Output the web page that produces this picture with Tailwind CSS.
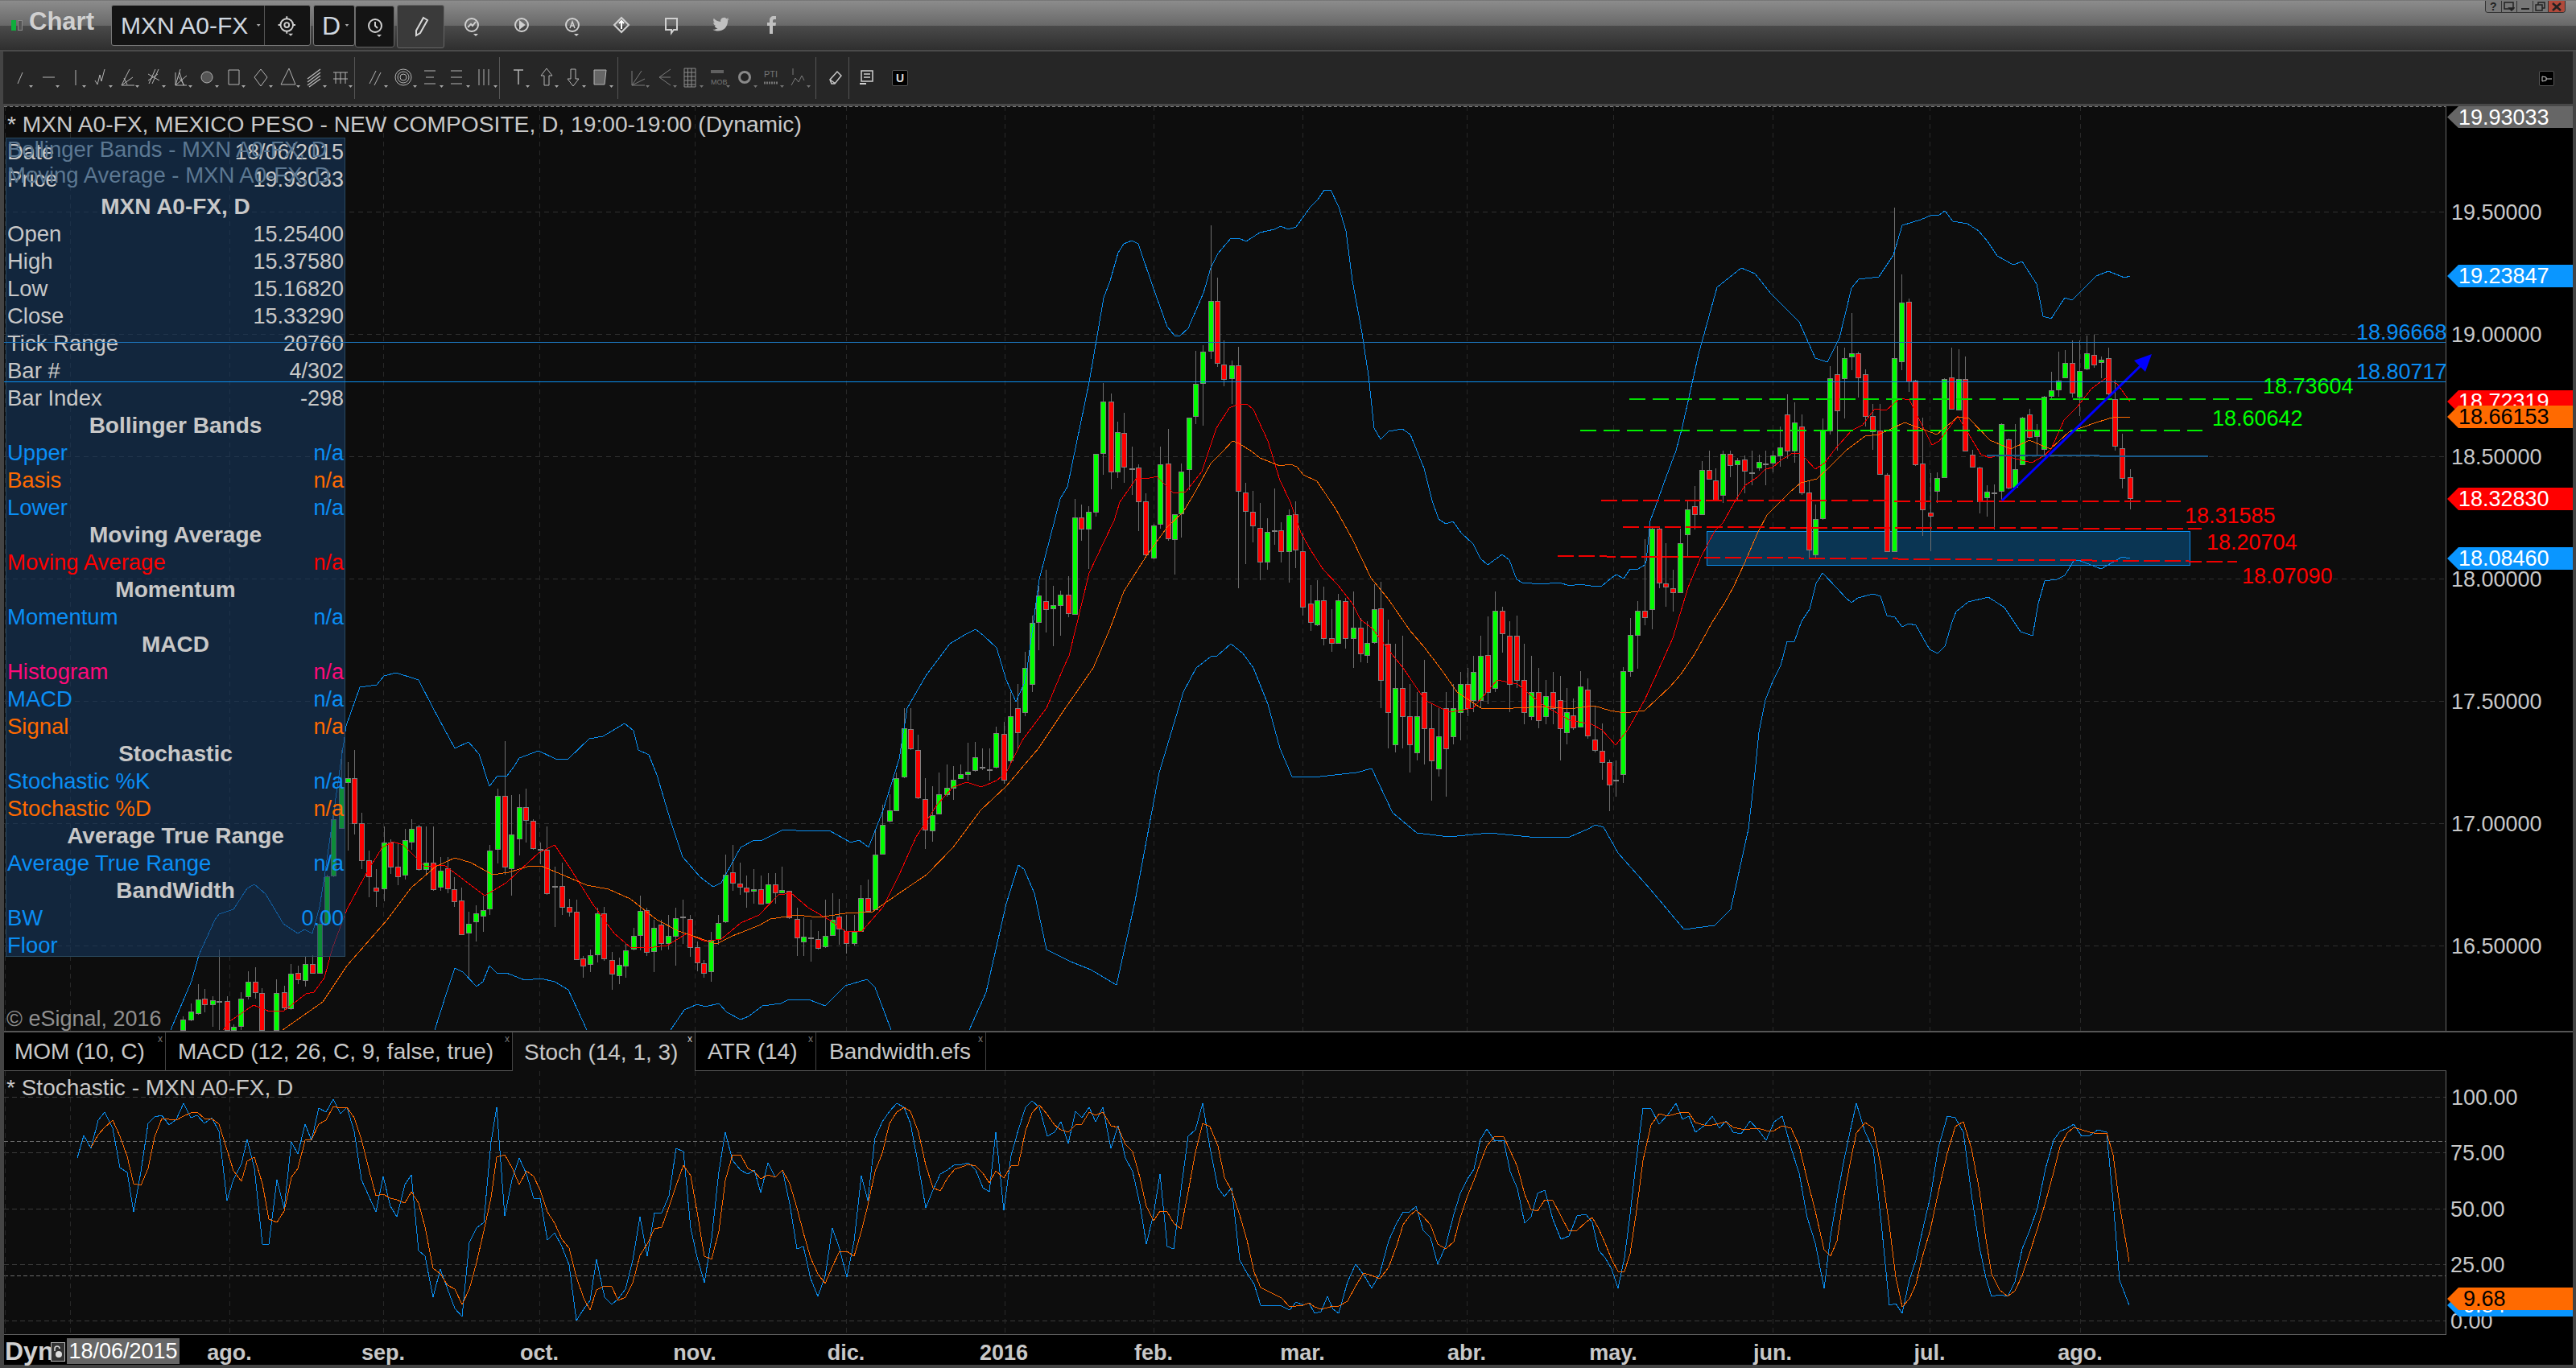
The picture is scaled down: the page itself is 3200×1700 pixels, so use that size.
<!DOCTYPE html>
<html lang="es">
<head>
<meta charset="UTF-8">
<title>Chart - MXN A0-FX</title>
<script src="https://cdn.jsdelivr.net/npm/@tailwindcss/browser@4"></script>
</head>
<body class="bg-black">
<div class="w-[3200px] h-[1700px] overflow-hidden flex flex-col font-['Liberation_Sans',Arial,sans-serif] text-[#c8c8c8] text-[27px] leading-[28px]">

  <!-- title bar -->
  <div class="h-[64px] shrink-0 relative flex items-start border-t border-[#777] bg-[linear-gradient(#8c8c8c_0,#686868_31px,#4a4a4a_31px,#2f2f2f_61px,#4a4a4a_61px)]">
    <div class="flex items-center gap-[2px] ml-[14px] mt-[24px]">
      <span class="w-[6px] h-[13px] bg-[#0fae3c]"></span><span class="w-[6px] h-[13px] bg-[#555] border border-[#888]"></span>
    </div>
    <div class="ml-[8px] w-[80px] mt-[12px] text-[31px] font-bold text-[#d0d0d0]">Chart</div>
    <div class="ml-[22px] mt-[5px] w-[248px] h-[51px] flex items-center bg-[#141414] border border-[#777] rounded-[3px]">
      <span class="ml-[11px] w-[158px] text-[30px] text-[#d0d8e0] whitespace-nowrap">MXN A0-FX</span>
      <svg class="w-[20px] h-[10px]" viewBox="0 0 20 10"><path d="M11 3h5l-2.500 3z" fill="#aaa"/></svg>
      <span class="w-px h-full bg-[#555]"></span>
      <svg class="w-[58px] h-[30px]" viewBox="0 0 58 30" fill="none" stroke="#d0d0d0" stroke-width="2"><circle cx="29" cy="14" r="8"/><circle cx="29" cy="14" r="3"/><path d="M29 3v3M29 22v3M18 14h3M37 14h3"/><path d="M31 25h6l-3 3z" fill="#d0d0d0" stroke="none"/></svg>
    </div>
    <div class="ml-[3px] mt-[5px] w-[52px] h-[51px] flex items-center bg-[#141414] border border-[#777] rounded-[3px]">
      <span class="ml-[10px] text-[32px] text-[#d0d8e0]">D</span>
      <svg class="w-[18px] h-[10px]" viewBox="0 0 18 10"><path d="M6 3h5l-2.500 3z" fill="#aaa"/></svg>
    </div>
    <div class="mt-[6px] w-[49px] h-[52px] flex items-center justify-center bg-[#141414] border border-[#666] rounded-[3px]">
      <svg class="w-[30px] h-[30px]" viewBox="0 0 30 30" fill="none" stroke="#d0d0d0" stroke-width="2"><circle cx="15" cy="14" r="8"/><path d="M15 9v5l3 3"/><path d="M17 25h6l-3 3z" fill="#d0d0d0" stroke="none"/></svg>
    </div>
    <div class="ml-[3px] mt-[5px] w-[59px] h-[54px] flex items-center justify-center bg-[#3a3a3a] border border-[#666] rounded-[3px]">
      <svg class="w-[24px] h-[30px]" viewBox="0 0 24 30" fill="none" stroke="#d8d8d8" stroke-width="2"><path d="M15 4l5 3-9 16-5 3 0-6z"/></svg>
    </div>
    <div class="ml-[3px] mt-[15px] flex items-center">
      <svg class="w-[62px] h-[32px]" viewBox="0 0 62 32" fill="none" stroke="#d0d0d0" stroke-width="2"><circle cx="31" cy="15" r="8"/><path d="M26 18l4-4 2 2 4-5"/><path d="M33 26h6l-3 3z" fill="#d0d0d0" stroke="none"/></svg>
      <svg class="w-[63px] h-[32px]" viewBox="0 0 63 32" fill="none" stroke="#d0d0d0" stroke-width="2"><circle cx="31" cy="15" r="8"/><path d="M29 11l5 4-5 4z" fill="#d0d0d0"/></svg>
      <svg class="w-[62px] h-[32px]" viewBox="0 0 62 32" fill="none" stroke="#d0d0d0" stroke-width="2"><circle cx="31" cy="15" r="8"/><path d="M28 19l3-8 3 8M29 16h4" stroke-width="1.500"/><path d="M33 26h6l-3 3z" fill="#d0d0d0" stroke="none"/></svg>
      <svg class="w-[61px] h-[32px]" viewBox="0 0 61 32" fill="none" stroke="#d0d0d0" stroke-width="2"><path d="M30 6l9 9-9 9-9-9z"/><path d="M30 10v10M27 13l3-3 3 3" stroke="#fff"/></svg>
      <svg class="w-[62px] h-[32px]" viewBox="0 0 62 32" fill="none" stroke="#d0d0d0" stroke-width="2"><path d="M24 7h14v14h-4l-3 4v-4h-7z"/></svg>
      <svg class="w-[62px] h-[32px]" viewBox="0 0 62 32"><path d="M41 9c-1 .500-2 .700-3 .800 1-.600 2-1.600 2-2.600-1 .600-2 1-3 1.200a5 5 0 0 0-8.500 4.500c-4-.200-7.500-2-10-5-1.300 2.300-.600 5.200 1.500 6.600-.800 0-1.500-.200-2.200-.600 0 2.400 1.700 4.500 4 5-.700.200-1.500.200-2.200.100.600 2 2.500 3.400 4.600 3.400-2 1.600-4.600 2.300-7.200 2 7 4.500 22 2.500 22-13.400 1-.700 1.700-1.500 2-2z" fill="#c0c0c0" transform="translate(6 0) scale(.85)"/></svg>
      <svg class="w-[62px] h-[32px]" viewBox="0 0 62 32"><path d="M29 26V16h-3v-4h3V9c0-3 2-5 5-5h3v4h-2c-1 0-2 .500-2 2v2h4l-.500 4H33v10z" fill="#c0c0c0"/></svg>
    </div>
    <div class="absolute right-[13px] top-0 flex h-[15px] w-[100px] rounded-b-[4px] overflow-hidden border border-[#333] border-t-0 text-[#222]">
      <div class="w-[20px] bg-[#777] border-r border-[#333] flex items-center justify-center text-[14px] font-bold leading-[14px]">?</div>
      <div class="w-[20px] bg-[#777] border-r border-[#333] flex items-center justify-center"><svg class="w-[14px] h-[12px]" viewBox="0 0 14 12" fill="none" stroke="#222" stroke-width="1.500"><path d="M1 1h11v8H1z"/><path d="M7 8h6l-3 3z" fill="#222"/></svg></div>
      <div class="w-[20px] bg-[#777] border-r border-[#333] flex items-end justify-center pb-[3px]"><span class="w-[10px] h-[2px] bg-[#222]"></span></div>
      <div class="w-[20px] bg-[#777] border-r border-[#333] flex items-center justify-center"><svg class="w-[14px] h-[12px]" viewBox="0 0 14 12" fill="none" stroke="#222" stroke-width="1.500"><path d="M1 4h8v7H1zM4 4V1h8v7H9"/></svg></div>
      <div class="w-[20px] bg-[#b0493a] flex items-center justify-center"><svg class="w-[12px] h-[11px]" viewBox="0 0 12 11" fill="none" stroke="#222" stroke-width="2.500"><path d="M1 1l10 9M11 1L1 10"/></svg></div>
    </div>
  </div>

  <div class="flex-1 flex flex-col min-h-0 border-l-[5px] border-r-[4px] border-b-[4px] border-[#444]">

    <!-- drawing toolbar -->
    <div class="h-[65px] shrink-0 relative bg-[#262626] flex items-center text-[#b4b4b4] -ml-[1px]">
      <div class="ml-[8px] flex items-center h-[52px]">
        <svg class="w-[33px] h-[30px]" viewBox="0 0 33 30" fill="none" stroke="#b4b4b4"><path d="M10 22l6-14"/><path d="M24 24h5l-2.500 3z" fill="#aaa" stroke="none"/></svg>
        <svg class="w-[33px] h-[30px]" viewBox="0 0 33 30" fill="none" stroke="#b4b4b4"><path d="M8 14h15"/><path d="M24 24h5l-2.500 3z" fill="#aaa" stroke="none"/></svg>
        <svg class="w-[33px] h-[30px]" viewBox="0 0 33 30" fill="none" stroke="#b4b4b4"><path d="M16 5v19"/><path d="M24 24h5l-2.500 3z" fill="#aaa" stroke="none"/></svg>
        <svg class="w-[33px] h-[30px]" viewBox="0 0 33 30" fill="none" stroke="#b4b4b4"><path d="M7 18l3 5 3-12 2 8 4-15"/><path d="M24 24h5l-2.500 3z" fill="#aaa" stroke="none"/></svg>
        <svg class="w-[33px] h-[30px]" viewBox="0 0 33 30" fill="none" stroke="#b4b4b4"><path d="M7 24L17 4M7 24l14-10M7 24h16M10 15l4 8"/><path d="M24 24h5l-2.500 3z" fill="#aaa" stroke="none"/></svg>
        <svg class="w-[33px] h-[30px]" viewBox="0 0 33 30" fill="none" stroke="#b4b4b4"><path d="M8 22l8-18M12 22l8-18M7 10l14 8M7 18l12-8"/><path d="M24 24h5l-2.500 3z" fill="#aaa" stroke="none"/></svg>
        <svg class="w-[33px] h-[30px]" viewBox="0 0 33 30" fill="none" stroke="#b4b4b4"><path d="M8 24L14 4M8 24l14-12M8 24h14M8 24V8M11 12l8 12M13 8l5 16"/><path d="M24 24h5l-2.500 3z" fill="#aaa" stroke="none"/></svg>
        <svg class="w-[33px] h-[30px]" viewBox="0 0 33 30" fill="#555" stroke="#b4b4b4"><circle cx="14" cy="14" r="7"/><path d="M24 24h5l-2.500 3z" fill="#aaa" stroke="none"/></svg>
        <svg class="w-[33px] h-[30px]" viewBox="0 0 33 30" fill="none" stroke="#b4b4b4"><path d="M8 5h13v18H8z"/><path d="M24 24h5l-2.500 3z" fill="#aaa" stroke="none"/></svg>
        <svg class="w-[34px] h-[30px]" viewBox="0 0 34 30" fill="none" stroke="#b4b4b4"><path d="M15 4l8 10-8 11-8-11z"/><path d="M25 24h5l-2.500 3z" fill="#aaa" stroke="none"/></svg>
        <svg class="w-[33px] h-[30px]" viewBox="0 0 33 30" fill="none" stroke="#b4b4b4"><path d="M16 3l8 20H6z"/><path d="M25 24h5l-2.500 3z" fill="#aaa" stroke="none"/></svg>
        <svg class="w-[33px] h-[30px]" viewBox="0 0 33 30" fill="none" stroke="#b4b4b4" stroke-width="1.500"><path d="M6 16L22 4M6 20L22 8M6 24l16-12M8 26l14-10"/><path d="M25 24h5l-2.500 3z" fill="#aaa" stroke="none"/></svg>
        <svg class="w-[31px] h-[30px]" viewBox="0 0 31 30" fill="none" stroke="#b4b4b4"><path d="M5 8h18M8 8v14M14 8v14M20 8v14M5 16h18"/><path d="M24 24h5l-2.500 3z" fill="#aaa" stroke="none"/></svg>
      </div>
      <span class="w-px h-[52px] bg-[#555]"></span>
      <div class="w-[179px] pl-[8px] flex items-center h-[52px]">
        <svg class="w-[38px] h-[30px]" viewBox="0 0 38 30" fill="none" stroke="#b4b4b4"><path d="M10 22L18 6M16 24l8-16"/><path d="M28 24h5l-2.500 3z" fill="#aaa" stroke="none"/></svg>
        <svg class="w-[33px] h-[30px]" viewBox="0 0 33 30" fill="none" stroke="#b4b4b4"><circle cx="14" cy="14" r="10"/><circle cx="14" cy="14" r="7"/><circle cx="14" cy="14" r="4"/><path d="M26 24h5l-2.500 3z" fill="#aaa" stroke="none"/></svg>
        <svg class="w-[33px] h-[30px]" viewBox="0 0 33 30" fill="none" stroke="#b4b4b4"><path d="M7 6h14M9 14h10M7 22h14"/><path d="M26 24h5l-2.500 3z" fill="#aaa" stroke="none"/></svg>
        <svg class="w-[34px] h-[30px]" viewBox="0 0 34 30" fill="none" stroke="#b4b4b4"><path d="M7 6h14M7 14h14M7 22h14"/><path d="M26 24h5l-2.500 3z" fill="#aaa" stroke="none"/></svg>
        <svg class="w-[33px] h-[30px]" viewBox="0 0 33 30" fill="none" stroke="#b4b4b4"><path d="M8 4v20M14 4v20M20 4v20"/><path d="M26 24h5l-2.500 3z" fill="#aaa" stroke="none"/></svg>
      </div>
      <span class="w-px h-[52px] bg-[#555]"></span>
      <div class="w-[146px] pl-[5px] flex items-center h-[52px]">
        <svg class="w-[38px] h-[30px]" viewBox="0 0 38 30" fill="none" stroke="#b4b4b4" stroke-width="1.500"><path d="M12 5h12M18 5v18"/><path d="M27 24h5l-2.500 3z" fill="#aaa" stroke="none"/></svg>
        <svg class="w-[33px] h-[30px]" viewBox="0 0 33 30" fill="none" stroke="#b4b4b4"><path d="M15 3l7 9h-4v12h-6V12H8z"/><path d="M25 24h5l-2.500 3z" fill="#aaa" stroke="none"/></svg>
        <svg class="w-[34px] h-[30px]" viewBox="0 0 34 30" fill="none" stroke="#b4b4b4"><path d="M15 25l7-9h-4V4h-6v12H8z"/><path d="M26 24h5l-2.500 3z" fill="#aaa" stroke="none"/></svg>
        <svg class="w-[33px] h-[30px]" viewBox="0 0 33 30" fill="#666" stroke="#b4b4b4"><path d="M7 5h15l-2 18H7z"/><path d="M26 24h5l-2.500 3z" fill="#aaa" stroke="none"/></svg>
      </div>
      <span class="w-px h-[52px] bg-[#555]"></span>
      <div class="w-[245px] pl-[8px] flex items-center h-[52px] opacity-60">
        <svg class="w-[35px] h-[30px]" viewBox="0 0 35 30" fill="none" stroke="#b4b4b4"><path d="M9 24L21 6M9 24l16-8M9 24h16M9 24V6"/><path d="M26 24h5l-2.500 3z" fill="#aaa" stroke="none"/></svg>
        <svg class="w-[33px] h-[30px]" viewBox="0 0 33 30" fill="none" stroke="#b4b4b4"><path d="M22 4L8 14l14 10M8 14h14"/><path d="M25 24h5l-2.500 3z" fill="#aaa" stroke="none"/></svg>
        <svg class="w-[33px] h-[30px]" viewBox="0 0 33 30" fill="none" stroke="#d0d0d0"><path d="M6 3h14v23H6zM10.500 3v23M15 3v23M6 8h14M6 13h14M6 18h14M6 23h14"/><path d="M25 24h5l-2.500 3z" fill="#aaa" stroke="none"/></svg>
        <svg class="w-[34px] h-[30px]" viewBox="0 0 34 30" fill="none"><path d="M6 5h16v4H6z" fill="#888"/><text x="6" y="23" font-size="9" fill="#aaa" stroke="none">MOB</text><path d="M25 24h5l-2.500 3z" fill="#aaa"/></svg>
        <svg class="w-[33px] h-[30px]" viewBox="0 0 33 30"><circle cx="14" cy="14" r="8" fill="#ccc"/><circle cx="14" cy="14" r="5" fill="#222"/><path d="M25 24h5l-2.500 3z" fill="#aaa"/></svg>
        <svg class="w-[33px] h-[30px]" viewBox="0 0 33 30" fill="none"><text x="5" y="14" font-size="11" fill="#aaa">PTI</text><path d="M5 21h18" stroke="#aaa" stroke-width="3" stroke-dasharray="2 1"/><path d="M25 24h5l-2.500 3z" fill="#aaa"/></svg>
        <svg class="w-[33px] h-[30px]" viewBox="0 0 33 30" fill="none" stroke="#b4b4b4"><path d="M6 24l5-9 4 5 4-8 3 6M8 3v8"/><path d="M25 24h5l-2.500 3z" fill="#aaa" stroke="none"/></svg>
      </div>
      <span class="w-px h-[52px] bg-[#555]"></span>
      <svg class="w-[40px] h-[30px]" viewBox="-5 0 40 30" fill="none" stroke="#c8c8c8" stroke-width="1.500"><path d="M14 22l-2-5 9-10 5 5-8 10zM12 17l7 5"/></svg>
      <span class="w-px h-[52px] bg-[#555]"></span>
      <svg class="w-[48px] h-[30px]" viewBox="0 0 48 30" fill="none" stroke="#d0d0d0" stroke-width="1.500"><path d="M15 6h14v13H15zM18 10h8M18 14h8"/><path d="M13 22h8" stroke-width="2"/></svg>
      <div class="ml-[5px] w-[20px] h-[20px] flex items-center justify-center bg-black border border-[#555] rounded-[2px] text-[14px] font-bold text-[#ddd] leading-none">U</div>
      <div class="absolute left-[3150px] top-[24px] w-[19px] h-[19px] flex items-center justify-center bg-black border border-[#555] rounded-[2px]">
        <svg class="w-[14px] h-[10px]" viewBox="0 0 14 10" fill="none" stroke="#ccc"><path d="M1 2l5 1v4L1 8zM6 5h7"/></svg>
      </div>
    </div>
    <div class="h-[3px] shrink-0 bg-[#484848]"></div>

    <!-- price chart + axis -->
    <div class="h-[1149px] shrink-0 flex">
      <div class="w-[3034px] shrink-0 relative bg-[#0d0d0d] border-r border-[#666] overflow-hidden">
        <svg id="priceChart" class="absolute left-0 top-0 w-[3033px] h-[1149px]" viewBox="5 132 3033 1149"></svg>

        <div class="absolute left-[2px] top-[39px] w-[422px] h-[1018px] bg-[#163860]/58 border border-[#2a4a60] flex flex-col px-[1px] text-[27.500px] [&_span:last-child]:text-[27px]">
          <div class="absolute left-[1px] top-0 text-[#5c7892] whitespace-nowrap">Bollinger Bands - MXN A0-FX, D</div>
          <div class="absolute left-[1px] top-[32px] text-[#5c7892] whitespace-nowrap">Moving Average - MXN A0-FX, D</div>
          <div class="h-[34px] shrink-0 flex justify-between items-center"><span>Date</span><span>18/06/2015</span></div>
          <div class="h-[34px] shrink-0 flex justify-between items-center"><span>Price</span><span>19.93033</span></div>
          <div class="h-[34px] shrink-0 flex justify-center items-center text-[28px] font-bold">MXN A0-FX, D</div>
          <div class="h-[34px] shrink-0 flex justify-between items-center"><span>Open</span><span>15.25400</span></div>
          <div class="h-[34px] shrink-0 flex justify-between items-center"><span>High</span><span>15.37580</span></div>
          <div class="h-[34px] shrink-0 flex justify-between items-center"><span>Low</span><span>15.16820</span></div>
          <div class="h-[34px] shrink-0 flex justify-between items-center"><span>Close</span><span>15.33290</span></div>
          <div class="h-[34px] shrink-0 flex justify-between items-center"><span>Tick Range</span><span>20760</span></div>
          <div class="h-[34px] shrink-0 flex justify-between items-center"><span>Bar #</span><span>4/302</span></div>
          <div class="h-[34px] shrink-0 flex justify-between items-center"><span>Bar Index</span><span>-298</span></div>
          <div class="h-[34px] shrink-0 flex justify-center items-center text-[28px] font-bold">Bollinger Bands</div>
          <div class="h-[34px] shrink-0 flex justify-between items-center text-[#0a8ef5]"><span>Upper</span><span>n/a</span></div>
          <div class="h-[34px] shrink-0 flex justify-between items-center text-[#ff6a00]"><span>Basis</span><span>n/a</span></div>
          <div class="h-[34px] shrink-0 flex justify-between items-center text-[#0a8ef5]"><span>Lower</span><span>n/a</span></div>
          <div class="h-[34px] shrink-0 flex justify-center items-center text-[28px] font-bold">Moving Average</div>
          <div class="h-[34px] shrink-0 flex justify-between items-center text-[#ff0000]"><span>Moving Average</span><span>n/a</span></div>
          <div class="h-[34px] shrink-0 flex justify-center items-center text-[28px] font-bold">Momentum</div>
          <div class="h-[34px] shrink-0 flex justify-between items-center text-[#0a8ef5]"><span>Momentum</span><span>n/a</span></div>
          <div class="h-[34px] shrink-0 flex justify-center items-center text-[28px] font-bold">MACD</div>
          <div class="h-[34px] shrink-0 flex justify-between items-center text-[#ff0a78]"><span>Histogram</span><span>n/a</span></div>
          <div class="h-[34px] shrink-0 flex justify-between items-center text-[#0a8ef5]"><span>MACD</span><span>n/a</span></div>
          <div class="h-[34px] shrink-0 flex justify-between items-center text-[#ff6a00]"><span>Signal</span><span>n/a</span></div>
          <div class="h-[34px] shrink-0 flex justify-center items-center text-[28px] font-bold">Stochastic</div>
          <div class="h-[34px] shrink-0 flex justify-between items-center text-[#0a8ef5]"><span>Stochastic %K</span><span>n/a</span></div>
          <div class="h-[34px] shrink-0 flex justify-between items-center text-[#ff6a00]"><span>Stochastic %D</span><span>n/a</span></div>
          <div class="h-[34px] shrink-0 flex justify-center items-center text-[28px] font-bold">Average True Range</div>
          <div class="h-[34px] shrink-0 flex justify-between items-center text-[#0a8ef5]"><span>Average True Range</span><span>n/a</span></div>
          <div class="h-[34px] shrink-0 flex justify-center items-center text-[28px] font-bold">BandWidth</div>
          <div class="h-[34px] shrink-0 flex justify-between items-center text-[#0a8ef5]"><span>BW</span><span>0.00</span></div>
          <div class="h-[34px] shrink-0 flex items-center text-[#0a8ef5]">Floor</div>
        </div>

        <div class="absolute left-0 top-[293px] w-full h-px bg-[#1c72b8]"></div>
        <div class="absolute left-0 top-[342px] w-full h-px bg-[#0a8ef0]"></div>

        <div class="absolute left-[4px] top-[8px] text-[28.200px] whitespace-nowrap">* MXN A0-FX, MEXICO PESO - NEW COMPOSITE, D, 19:00-19:00 (Dynamic)</div>
        <div class="absolute left-[3px] top-[1120px] text-[#8f8f8f] whitespace-nowrap">© eSignal, 2016</div>

        <div class="absolute left-[2922px] top-[267px] text-[#0a8ef5]">18.96668</div>
        <div class="absolute left-[2922px] top-[316px] text-[#0a8ef5]">18.80717</div>
        <div class="absolute left-[2806px] top-[334px] text-[#00ff00]">18.73604</div>
        <div class="absolute left-[2743px] top-[374px] text-[#00ff00]">18.60642</div>
        <div class="absolute left-[2709px] top-[495px] text-[#ff0000]">18.31585</div>
        <div class="absolute left-[2736px] top-[528px] text-[#ff0000]">18.20704</div>
        <div class="absolute left-[2780px] top-[570px] text-[#ff0000]">18.07090</div>
      </div>

      <div class="flex-1 relative bg-black">
        <div class="absolute left-[6px] top-[118px]">19.50000</div>
        <div class="absolute left-[6px] top-[270px]">19.00000</div>
        <div class="absolute left-[6px] top-[422px]">18.50000</div>
        <div class="absolute left-[6px] top-[574px]">18.00000</div>
        <div class="absolute left-[6px] top-[726px]">17.50000</div>
        <div class="absolute left-[6px] top-[878px]">17.00000</div>
        <div class="absolute left-[6px] top-[1030px]">16.50000</div>
        <div class="absolute left-[1px] top-0 w-[156px] h-[27px] pl-[14px] flex items-center bg-[#666] text-white [clip-path:polygon(0_50%,14px_0,100%_0,100%_100%,14px_100%)]">19.93033</div>
        <div class="absolute left-[1px] top-[197px] w-[156px] h-[28px] pl-[14px] flex items-center bg-[#0a96ff] text-white [clip-path:polygon(0_50%,14px_0,100%_0,100%_100%,14px_100%)]">19.23847</div>
        <div class="absolute left-[1px] top-[353px] w-[156px] h-[28px] pl-[14px] flex items-center bg-[#ff0000] text-white [clip-path:polygon(0_50%,14px_0,100%_0,100%_100%,14px_100%)]">18.72319</div>
        <div class="absolute left-[1px] top-[372px] w-[156px] h-[28px] pl-[14px] flex items-center bg-[#ff6a00] text-black [clip-path:polygon(0_50%,14px_0,100%_0,100%_100%,14px_100%)]">18.66153</div>
        <div class="absolute left-[1px] top-[474px] w-[156px] h-[28px] pl-[14px] flex items-center bg-[#ff0000] text-white [clip-path:polygon(0_50%,14px_0,100%_0,100%_100%,14px_100%)]">18.32830</div>
        <div class="absolute left-[1px] top-[548px] w-[156px] h-[28px] pl-[14px] flex items-center bg-[#0a96ff] text-white [clip-path:polygon(0_50%,14px_0,100%_0,100%_100%,14px_100%)]">18.08460</div>
      </div>
    </div>

    <!-- study tabs -->
    <div class="h-[50px] shrink-0 flex bg-black border-t-2 border-[#555] text-[28px]">
      <div class="w-[201px] h-[48px] relative flex items-center pl-[13px] border-r border-[#444] border-b border-b-[#555]">MOM (10, C)<span class="absolute right-[3px] top-[2px] text-[12px] leading-[12px] text-[#777]">x</span></div>
      <div class="w-[431px] h-[48px] relative flex items-center pl-[15px] border-r border-[#444] border-b border-b-[#555]">MACD (12, 26, C, 9, false, true)<span class="absolute right-[3px] top-[2px] text-[12px] leading-[12px] text-[#777]">x</span></div>
      <div class="w-[227px] h-[50px] relative flex items-center pl-[14px] bg-[#0d0d0d] border-r border-[#555]">Stoch (14, 1, 3)<span class="absolute right-[3px] top-[2px] text-[12px] leading-[12px] text-[#ccc]">x</span></div>
      <div class="w-[150px] h-[48px] relative flex items-center pl-[15px] border-r border-[#444] border-b border-b-[#555]">ATR (14)<span class="absolute right-[3px] top-[2px] text-[12px] leading-[12px] text-[#777]">x</span></div>
      <div class="w-[211px] h-[48px] relative flex items-center pl-[16px] border-r border-[#444] border-b border-b-[#555]">Bandwidth.efs<span class="absolute right-[3px] top-[2px] text-[12px] leading-[12px] text-[#777]">x</span></div>
      <div class="w-[1814px] h-[48px] border-b border-[#555]"></div>
    </div>

    <!-- stochastic pane -->
    <div class="h-[328px] shrink-0 flex">
      <div class="w-[3034px] shrink-0 relative bg-[#0d0d0d] border-r border-b border-[#666] overflow-hidden">
        <svg id="stochChart" class="absolute left-0 top-0 w-[3033px] h-[327px]" viewBox="5 1332 3033 327"></svg>
        <div class="absolute left-[3px] top-[7px] text-[28px] whitespace-nowrap">* Stochastic - MXN A0-FX, D</div>
      </div>
      <div class="flex-1 relative bg-black">
        <div class="absolute left-[6px] top-[19px]">100.00</div>
        <div class="absolute left-[5px] top-[88px]">75.00</div>
        <div class="absolute left-[5px] top-[158px]">50.00</div>
        <div class="absolute left-[5px] top-[227px]">25.00</div>
        <div class="absolute left-[5px] top-[297px]">0.00</div>
        <div class="absolute left-[1px] top-[277px] w-[156px] h-[28px] pl-[20px] flex items-center bg-[#0a96ff] text-white [clip-path:polygon(0_50%,14px_0,100%_0,100%_100%,14px_100%)]">9.84</div>
        <div class="absolute left-[1px] top-[269px] w-[156px] h-[28px] pl-[20px] flex items-center bg-[#ff6a00] text-black [clip-path:polygon(0_50%,14px_0,100%_0,100%_100%,14px_100%)]">9.68</div>
      </div>
    </div>

    <!-- time axis -->
    <div class="flex-1 relative bg-black font-bold">
      <div class="absolute left-[1px] top-[3px] text-[32px] leading-[34px] text-[#d0d0d0]">Dyn</div>
      <div class="absolute left-[58px] top-[9px] w-[18px] h-[24px] flex items-center justify-center bg-[#333] border border-[#bbb]">
        <svg class="w-[14px] h-[18px]" viewBox="0 0 14 18" fill="none" stroke="#ddd" stroke-width="1.500"><path d="M3 8V5a3 3 0 0 1 6 0"/><circle cx="8" cy="12" r="4" fill="#ddd" stroke="none"/></svg>
      </div>
      <div class="absolute left-[78px] top-[4px] w-[140px] h-[32px] flex items-center justify-center bg-[#666] text-white font-normal">18/06/2015</div>
      <div class="absolute left-[280px] top-[8px] -translate-x-1/2">ago.</div>
      <div class="absolute left-[471px] top-[8px] -translate-x-1/2">sep.</div>
      <div class="absolute left-[665px] top-[8px] -translate-x-1/2">oct.</div>
      <div class="absolute left-[858px] top-[8px] -translate-x-1/2">nov.</div>
      <div class="absolute left-[1046px] top-[8px] -translate-x-1/2">dic.</div>
      <div class="absolute left-[1242px] top-[8px] -translate-x-1/2">2016</div>
      <div class="absolute left-[1428px] top-[8px] -translate-x-1/2">feb.</div>
      <div class="absolute left-[1613px] top-[8px] -translate-x-1/2">mar.</div>
      <div class="absolute left-[1817px] top-[8px] -translate-x-1/2">abr.</div>
      <div class="absolute left-[1999px] top-[8px] -translate-x-1/2">may.</div>
      <div class="absolute left-[2197px] top-[8px] -translate-x-1/2">jun.</div>
      <div class="absolute left-[2392px] top-[8px] -translate-x-1/2">jul.</div>
      <div class="absolute left-[2579px] top-[8px] -translate-x-1/2">ago.</div>
    </div>
  </div>
</div>

<script>
// traced candles: [x, colour, bodyTop, bodyBottom, high, low], G green, R red, N doji
// each block is read off a crop, so it carries its own scale back to page pixels
var seg10 = [[41,'G',1162,1200,1150,1200],[55,'G',1132,1160,1100,1165],[68,'G',1087,1138,1030,1145],[81,'R',1084,1105,1047,1135],[95,'G',1090,1105,1075,1190],[108,'N',1092,1092,900,1200],[122,'R',1093,1200,1075,1200],[135,'G',1188,1200,1180,1200],[148,'G',1083,1186,1060,1200],[161,'G',1021,1075,980,1085],[174,'R',1021,1060,967,1085],[187,'R',1063,1200,1045,1200],[214,'G',1063,1200,1010,1200],[228,'R',1060,1115,1035,1125],[241,'G',991,1120,955,1125],[254,'R',988,1010,960,1030],[267,'G',955,1015,925,1040],[280,'R',955,988,920,990],[294,'G',803,988,780,990],[307,'G',628,800,620,805],[320,'G',413,623,400,630],[334,'G',295,448,155,450],[346,'G',260,277,200,530],[359,'R',260,430,155,470],[372,'R',428,568,390,600],[385,'R',568,628,530,705],[399,'R',668,682,600,740],[413,'G',500,672,440,720],[426,'R',502,590,490,620],[439,'R',590,628,500,660],[452,'G',493,622,450,640],[465,'G',451,498,415,530],[478,'R',442,600,435,605],[492,'G',575,600,440,620],[505,'R',575,676,440,680],[518,'G',607,665,555,680],[531,'R',598,672,555,690],[544,'R',674,720,630,740],[557,'R',718,842,670,848],[571,'G',805,838,760,1010],[584,'G',764,795,735,870],[598,'G',752,775,700,835],[610,'G',530,748,510,770],[624,'G',328,526,300,580],[637,'R',326,592,122,620],[650,'G',470,596,325,700],[664,'G',368,486,322,550],[677,'R',368,418,300,500],[690,'R',421,523,415,530],[703,'N',525,525,500,580],[716,'R',527,690,440,695],[730,'N',662,662,590,815],[743,'R',662,740,575,770],[757,'R',740,758,710,775],[770,'R',758,935,715,940],[783,'R',932,960,925,1005],[796,'G',920,955,900,985],[809,'G',764,917,745,950],[822,'R',764,932,740,940],[836,'R',938,990,910,1050],[849,'G',958,995,930,1030],[862,'G',902,960,880,1005],[876,'G',850,898,820,905],[888,'G',755,845,700,905],[901,'R',752,910,745,925],[914,'G',820,905,790,985],[928,'R',808,875,790,905],[941,'G',850,877,770,900],[954,'G',782,850,745,960],[968,'N',778,778,715,880],[981,'R',785,892,770,925],[994,'R',892,947,870,980],[1007,'R',952,988,940,1005],[1020,'G',864,982,835,1020],[1033,'G',800,862,770,880],[1047,'G',620,795,545,800],[1060,'R',613,650,510,680],[1073,'R',655,667,575,695],[1086,'R',670,685,625,745],[1099,'G',676,682,600,730],[1113,'R',674,728,625,730],[1126,'G',658,727,615,730],[1139,'R',658,688,615,730],[1152,'G',678,688,590,690],[1165,'R',682,780,680,785],[1179,'R',785,855,745,925],[1192,'G',853,870,780,925],[1205,'N',855,855,790,945],[1219,'R',862,895,830,900],[1232,'G',848,888,715,895],[1245,'G',790,845,690,850],[1258,'R',778,822,710,880],[1271,'R',830,875,770,915],[1285,'G',835,877,770,885],[1298,'G',708,832,660,835],[1311,'R',708,755,640,760],[1325,'G',547,750,460,755],[1338,'G',435,543,360,545],[1351,'G',382,420,320,425],[1364,'G',260,380,240,385],[1378,'G',75,255,0,260],[1391,'R',77,150,0,155],[1404,'R',155,333,100,340],[1417,'R',338,453,260,525],[1430,'G',398,457,290,498],[1443,'G',322,393,240,395],[1457,'G',297,320,210,330],[1470,'G',268,296,215,340],[1483,'G',245,262,210,265],[1497,'G',236,245,130,270],[1510,'G',183,232,125,235],[1523,'N',218,218,150,230],[1536,'N',228,228,150,270],[1549,'G',92,220,70,225],[1563,'R',95,268,50,280]];
var seg9 = [[177,'G',1332,1420,1300,1510],[195,'R',1352,1376,1248,1452],[212,'G',1363,1374,1300,1495],[230,'G',1329,1365,1318,1465],[248,'R',1329,1390,1270,1402],[265,'G',1078,1392,1020,1396],[281,'R',1078,1115,1038,1155],[298,'G',1062,1117,1043,1247],[316,'G',874,1062,874,1078],[334,'G',704,870,643,940],[352,'R',704,931,678,988],[369,'G',803,930,768,950],[385,'R',806,915,740,967],[403,'N',919,919,848,1005],[420,'R',916,1028,908,1126],[438,'R',1028,1200,1000,1205],[456,'G',1104,1211,1100,1215],[473,'G',906,1100,848,1115],[491,'R',905,1148,793,1155],[507,'G',1070,1150,1070,1265],[524,'G',929,1066,905,1145],[542,'G',754,923,754,990],[559,'G',646,750,538,776],[577,'G',542,643,520,780],[595,'G',375,538,130,565],[612,'R',375,578,300,590],[628,'R',582,630,505,655],[646,'G',586,628,570,710],[663,'R',586,994,525,1310],[681,'R',999,1059,967,1230],[698,'R',1062,1106,993,1160],[716,'R',1114,1224,1032,1282],[734,'G',1125,1224,1082,1248],[750,'N',1121,1121,985,1168],[767,'R',1120,1190,1095,1225],[785,'G',1072,1190,1052,1290],[802,'R',1070,1184,1028,1245],[820,'R',1188,1370,1130,1400],[838,'R',1360,1420,1298,1447],[855,'G',1349,1427,1282,1430],[871,'R',1349,1470,1303,1495],[889,'R',1472,1486,1378,1517],[906,'G',1349,1486,1328,1490],[924,'R',1352,1470,1340,1505],[942,'G',1437,1470,1320,1568],[960,'R',1437,1522,1405,1550],[977,'G',1486,1525,1415,1550],[993,'G',1376,1483,1296,1490]];
var seg11 = [[13,'R',988,1033,925,1043],[40,'G',878,1030,822,1030],[67,'R',892,1063,848,1072],[94,'R',1076,1117,952,1125],[121,'R',1120,1160,1018,1228],[148,'R',1160,1246,1152,1345],[172,'N',1226,1226,1155,1290],[199,'G',823,1207,807,1238],[226,'G',688,822,625,845],[253,'G',598,688,560,812],[280,'R',598,622,330,650],[307,'G',292,592,285,665],[334,'R',292,493,285,513],[358,'R',496,508,345,582],[385,'R',512,528,445,602],[412,'G',346,528,290,530],[439,'G',220,313,185,395],[466,'R',208,238,132,293],[493,'G',73,238,40,240],[520,'R',73,106,0,106],[544,'R',110,185,65,185],[571,'G',13,166,0,195],[598,'R',13,55,0,98],[625,'G',35,52,28,185],[652,'R',32,76,18,158],[679,'N',80,80,0,130],[706,'G',43,63,15,75],[730,'N',47,47,0,128],[757,'G',17,45,0,80]];
var seg4 = [[0,'G',628,640,478,690],[14,'R',628,716,620,790],[30,'R',706,862,688,900],[46,'R',862,918,815,985],[61,'R',915,1078,815,1080],[77,'R',1080,1366,1075,1366],[93,'G',646,1364,85,1366],[108,'G',438,658,333,690],[123,'R',436,732,422,770],[138,'R',728,1040,725,1045],[154,'R',1037,1208,868,1310],[170,'R',1222,1232,1075,1365],[185,'G',1093,1141,1070,1185],[201,'G',722,1088,720,1090],[216,'R',718,833,605,835],[231,'G',724,836,612,840],[246,'R',724,990,640,992],[262,'R',1004,1050,988,1055],[277,'R',1054,1178,1050,1225],[293,'G',1144,1165,1120,1238],[309,'N',1145,1145,1115,1282],[324,'G',890,1140,888,1173],[339,'R',947,1128,945,1135],[354,'G',1060,1125,890,1125],[370,'G',868,1040,865,1045],[385,'R',856,940,835,945],[401,'G',915,937,890,1010],[417,'G',788,985,785,1010],[432,'G',766,785,695,800],[447,'G',728,762,622,790],[462,'G',664,718,615,720],[478,'R',662,775,578,790],[493,'G',692,788,578,860],[509,'G',626,685,560,690],[525,'R',632,670,558,680],[540,'G',650,660,640,720],[555,'R',646,778,605,800],[570,'R',797,972,725,990],[586,'R',980,1092,928,1132],[602,'R',1090,1168,1060,1210]];
// these fall between crops, already in page pixels
var segPage = [[1255,'G',890,945,860,950],[1264,'R',880,910,850,930],[1273,'G',830,885,810,890],[1282,'G',774,850,765,860],[1715,'R',756,845,723,880],[1724,'R',800,885,770,930],[1733,'G',855,925,800,935],[1742,'R',855,890,790,930],[1751,'R',890,925,850,960],[1760,'G',890,935,860,945],[1769,'R',860,905,820,950],[1778,'R',905,945,875,995],[1787,'G',915,955,880,965],[1796,'R',880,930,860,990],[1805,'G',880,915,850,925],[1814,'G',850,885,835,920],[1823,'R',850,880,830,890],[1830,'G',835,870,815,885],[1839,'G',815,870,790,880],[1848,'R',814,860,766,875],[1857,'G',759,855,735,860],[1866,'R',759,787,754,811],[1875,'R',790,850,772,885],[1884,'R',790,845,765,855],[1893,'R',845,885,800,900],[1902,'G',860,890,815,895],[1911,'R',860,895,830,905],[1920,'G',865,890,845,900],[1929,'R',860,880,835,900],[1938,'R',870,905,840,945],[1946,'G',885,910,855,925],[2211,'G',556,566,530,580],[2220,'R',515,560,490,570],[2229,'G',525,560,500,575],[2238,'R',530,612,515,615],[2247,'R',612,683,598,695],[2255,'G',645,689,627,693],[2264,'G',535,644,520,646],[2273,'G',470,535,455,540],[2282,'R',465,510,430,560],[2291,'G',445,470,432,520]];

function scaled(list, sx, ox, sy, oy) {
  return list.map(function (b) {
    return [ox + b[0] / sx, b[1], oy + b[2] / sy, oy + b[3] / sy, oy + b[4] / sy, oy + b[5] / sy];
  });
}
var candles = [].concat(
  scaled(seg10, 1.4933, 200, 3, 880),
  scaled(seg9, 1.96, 1200, 2.613, 230),
  scaled(seg11, 3, 1950, 3, 560),
  scaled(seg4, 1.742, 2300, 3, 230),
  segPage
);

var upper = [[212,1280],[238,1219],[247,1187],[267,1143],[272,1136],[290,1130],[307,1104],[316,1099],[330,1111],[352,1148],[370,1160],[378,1155],[388,1160],[397,1127],[403,1090],[420,971],[430,902],[447,854],[468,851],[477,840],[492,836],[520,845],[538,880],[565,930],[582,922],[595,937],[608,977],[618,964],[629,965],[639,952],[645,942],[669,933],[690,943],[706,943],[732,918],[749,915],[776,899],[787,908],[793,932],[806,938],[816,963],[833,1020],[848,1065],[870,1090],[886,1102],[896,1097],[920,1053],[937,1044],[947,1044],[973,1031],[1004,1033],[1030,1032],[1057,1047],[1067,1044],[1079,1053],[1097,1007],[1117,943],[1127,880],[1150,840],[1180,800],[1200,788],[1212,782],[1222,790],[1238,805],[1250,845],[1262,872],[1272,850],[1276,830],[1291,720],[1317,620],[1326,605],[1353,475],[1363,417],[1371,370],[1379,349],[1389,314],[1396,303],[1406,299],[1414,303],[1432,356],[1450,406],[1459,417],[1466,417],[1476,408],[1495,364],[1504,333],[1513,315],[1529,296],[1539,296],[1548,300],[1565,289],[1583,285],[1591,281],[1600,285],[1610,282],[1628,257],[1637,248],[1645,236],[1653,236],[1663,257],[1672,287],[1680,349],[1692,414],[1700,467],[1707,532],[1715,546],[1725,536],[1742,533],[1752,540],[1769,582],[1779,622],[1787,645],[1796,651],[1805,648],[1815,662],[1830,676],[1839,694],[1848,702],[1866,689],[1875,696],[1884,720],[1891,724],[1914,726],[1937,724],[1950,728],[1963,726],[1982,729],[1990,728],[2002,718],[2008,714],[2017,719],[2025,707],[2035,707],[2043,702],[2045,697],[2050,647],[2060,620],[2070,592],[2082,560],[2090,530],[2110,440],[2133,357],[2163,333],[2180,340],[2200,365],[2235,400],[2255,445],[2270,450],[2285,420],[2300,358],[2309,347],[2334,344],[2352,317],[2363,280],[2386,273],[2400,267],[2409,267],[2416,262],[2426,275],[2444,278],[2458,287],[2469,300],[2481,318],[2501,329],[2512,325],[2530,353],[2538,393],[2548,396],[2565,370],[2574,373],[2604,343],[2619,337],[2639,345],[2646,343]];
var lowerA = [[540,1280],[555,1233],[565,1203],[575,1208],[592,1226],[600,1220],[608,1200],[618,1210],[629,1209],[652,1218],[672,1216],[689,1220],[706,1230],[729,1280]];
var lowerB = [[833,1280],[850,1255],[866,1248],[876,1251],[893,1247],[903,1258],[920,1267],[930,1263],[947,1250],[970,1247],[980,1242],[1007,1243],[1025,1250],[1050,1225],[1077,1217],[1087,1227],[1107,1280]];
var lowerC = [[1204,1280],[1225,1233],[1250,1123],[1265,1075],[1272,1080],[1285,1110],[1300,1180],[1330,1195],[1355,1205],[1387,1224],[1410,1120],[1440,960],[1470,860],[1486,830],[1504,816],[1512,815],[1529,800],[1544,812],[1557,830],[1575,875],[1590,930],[1605,965],[1640,965],[1685,960],[1704,955],[1730,1010],[1760,1035],[1800,1040],[1850,1035],[1900,1040],[1950,1040],[1973,1030],[1982,1025],[1992,1028],[2010,1060],[2050,1105],[2092,1155],[2130,1150],[2150,1130],[2172,1030],[2180,960],[2185,910],[2193,870],[2202,847],[2212,827],[2220,797],[2229,797],[2238,772],[2248,757],[2256,725],[2264,712],[2283,732],[2292,742],[2300,749],[2308,743],[2327,738],[2336,741],[2344,765],[2354,767],[2363,779],[2371,775],[2380,777],[2397,807],[2407,812],[2416,803],[2425,773],[2430,760],[2445,748],[2470,742],[2490,755],[2510,785],[2525,790],[2532,750],[2540,722],[2555,720],[2565,715],[2576,697],[2582,696],[2610,707],[2636,692],[2646,694]];
var maRed = [[277,1280],[287,1268],[315,1249],[335,1257],[353,1256],[380,1235],[390,1233],[403,1215],[413,1178],[431,1130],[458,1080],[475,1053],[488,1046],[501,1050],[528,1077],[552,1075],[602,1113],[629,1097],[669,1060],[689,1050],[709,1080],[736,1123],[763,1160],[783,1177],[803,1178],[829,1175],[853,1160],[876,1170],[896,1167],[920,1147],[943,1137],[967,1112],[983,1110],[1004,1128],[1030,1143],[1050,1157],[1070,1158],[1097,1127],[1117,1087],[1138,1040],[1164,1000],[1184,978],[1201,972],[1219,978],[1238,970],[1250,960],[1270,920],[1300,880],[1321,830],[1328,815],[1353,712],[1371,674],[1384,647],[1391,624],[1412,594],[1424,595],[1437,592],[1458,613],[1473,611],[1493,586],[1511,532],[1527,507],[1539,502],[1549,502],[1557,509],[1575,548],[1590,597],[1603,624],[1616,662],[1629,685],[1644,708],[1662,727],[1680,750],[1690,770],[1705,781],[1725,808],[1743,830],[1770,870],[1800,885],[1830,880],[1860,845],[1885,850],[1915,875],[1950,895],[1977,900],[1990,907],[2007,926],[2022,907],[2043,870],[2060,833],[2078,793],[2097,730],[2113,692],[2130,660],[2140,650],[2157,620],[2168,603],[2183,593],[2193,583],[2202,581],[2212,572],[2227,563],[2235,563],[2243,570],[2255,583],[2267,575],[2278,560],[2300,535],[2314,528],[2329,508],[2343,510],[2360,495],[2372,497],[2386,525],[2400,553],[2409,548],[2432,517],[2461,565],[2472,569],[2484,565],[2524,575],[2538,567],[2548,558],[2564,522],[2581,505],[2598,483],[2616,470],[2630,477],[2646,499]];
var maOrange = [[351,1280],[401,1245],[431,1200],[481,1143],[511,1103],[541,1077],[565,1066],[585,1072],[612,1087],[632,1084],[655,1077],[672,1076],[689,1083],[729,1100],[756,1105],[783,1117],[816,1143],[843,1157],[890,1173],[910,1163],[943,1150],[957,1142],[990,1137],[1017,1140],[1050,1135],[1084,1133],[1117,1110],[1151,1087],[1184,1053],[1218,1007],[1250,977],[1290,930],[1320,885],[1358,830],[1379,781],[1396,735],[1424,691],[1450,655],[1470,636],[1486,609],[1504,576],[1519,561],[1531,548],[1539,551],[1555,561],[1565,569],[1590,579],[1603,577],[1611,580],[1619,590],[1636,598],[1659,632],[1680,670],[1703,718],[1725,745],[1751,783],[1769,804],[1789,830],[1810,860],[1840,880],[1880,880],[1920,878],[1950,881],[1980,877],[2000,883],[2018,886],[2043,883],[2057,870],[2075,853],[2088,838],[2105,813],[2115,795],[2127,773],[2142,750],[2153,730],[2167,700],[2183,663],[2195,640],[2215,620],[2223,612],[2237,600],[2257,595],[2270,583],[2293,560],[2317,542],[2334,540],[2366,525],[2406,540],[2432,518],[2446,520],[2472,547],[2498,558],[2521,547],[2547,558],[2570,537],[2604,525],[2627,518],[2646,518]];

// %K: left half from the crop (y = 1340 + v/3), right half from the whole picture (x2.041)
var kLeft = [[96,300],[104,215],[113,265],[122,160],[130,130],[140,190],[149,335],[158,355],[166,500],[175,350],[184,170],[192,148],[201,140],[210,178],[219,155],[228,95],[237,150],[245,140],[254,170],[263,150],[272,200],[282,460],[290,380],[300,320],[307,232],[316,340],[326,620],[334,622],[344,382],[353,490],[362,240],[370,285],[379,175],[387,235],[396,115],[405,128],[414,82],[423,135],[431,112],[440,200],[449,380],[458,440],[467,500],[476,368],[485,480],[493,520],[503,400],[511,362],[520,645],[528,665],[538,820],[547,715],[556,790],[565,860],[574,892],[583,615],[592,560],[601,540],[610,240],[617,110],[627,515],[636,380],[645,300],[654,360],[663,450],[671,450],[680,605],[689,578],[698,630],[707,700],[716,905],[725,865],[733,830],[741,678],[751,820],[760,845],[768,825],[777,790],[786,680],[795,518],[804,665],[813,505],[822,505],[831,440],[840,265],[849,277],[858,560],[866,670],[875,765],[884,600],[893,350],[901,205],[910,310],[920,345],[929,360],[937,345],[945,430],[954,318],[963,372],[972,345],[981,470],[990,640],[998,630],[1007,750],[1016,815],[1025,740],[1034,560],[1043,640],[1052,745],[1061,610],[1070,365],[1078,460],[1087,225],[1096,165],[1105,125],[1114,95],[1123,110],[1131,170],[1141,330],[1150,485],[1159,420],[1168,360],[1177,345],[1186,325],[1195,325],[1203,318],[1212,345],[1221,410],[1229,425],[1237,205],[1247,495],[1256,290],[1265,195],[1274,110],[1282,88],[1291,110],[1301,218],[1310,205],[1318,165],[1327,245],[1336,125],[1344,150],[1353,110],[1361,165],[1370,112],[1380,265],[1389,180],[1398,300],[1407,350],[1416,470],[1424,620],[1433,510],[1441,360],[1450,630],[1458,640],[1467,420],[1476,220],[1485,195],[1494,97],[1503,260],[1513,410],[1521,445],[1530,410],[1540,680],[1549,730],[1558,770],[1566,848]];
var kRight = [[775,798],[785,798],[793,795],[800,800],[808,790],[815,800],[825,770],[835,785],[850,745],[862,735],[875,770],[885,740],[905,688],[915,695],[928,745],[940,725],[950,755],[965,740],[985,785],[992,740],[1000,675],[1010,685],[1020,672],[1032,690],[1042,680],[1055,690],[1065,683],[1075,695],[1085,680],[1095,715],[1110,785],[1118,730],[1130,672],[1140,700],[1150,795],[1158,800],[1170,750],[1185,680],[1195,690],[1205,760],[1212,790],[1222,790],[1235,750],[1250,695],[1262,685],[1272,692],[1282,690],[1290,780],[1296,795]];

var kLine = kLeft.map(function (p) { return [p[0], 1340 + p[1] / 3]; });
// fill the right half out to one point a bar, with a little wobble so it is not straight
for (var i = 1; i < kRight.length; i++) {
  var a = kRight[i - 1], b = kRight[i];
  var x0 = a[0] * 2.041, x1 = b[0] * 2.041, n = Math.max(1, Math.round((x1 - x0) / 8.9));
  for (var j = 1; j <= n; j++) {
    var t = j / n;
    var wob = j < n ? Math.sin(x0 * 0.7 + j * 2.3) * 9 : 0;
    kLine.push([x0 + (x1 - x0) * t, (a[1] + (b[1] - a[1]) * t) * 2.041 + wob]);
  }
}
var dLine = [];
for (var k = 2; k < kLine.length; k++) {
  dLine.push([kLine[k][0], (kLine[k][1] + kLine[k - 1][1] + kLine[k - 2][1]) / 3]);
}

function poly(pts, col, w) {
  return '<polyline fill="none" stroke="' + col + '" stroke-width="' + (w || 1) + '" points="' + pts.map(function (p) { return Math.round(p[0]) + ',' + Math.round(p[1]); }).join(' ') + '"/>';
}
function dash(x1, y1, x2, y2, col, arr, w) {
  return '<line x1="' + x1 + '" y1="' + y1 + '" x2="' + x2 + '" y2="' + y2 + '" stroke="' + col + '" stroke-width="' + (w || 1) + '" stroke-dasharray="' + arr + '"/>';
}

var months = [6, 87, 285, 476, 670, 863, 1051, 1248, 1433, 1618, 1822, 2004, 2202, 2397, 2584];
var g = '<g shape-rendering="crispEdges">';
[263, 415, 567, 719, 871, 1023, 1175].forEach(function (y) { g += dash(5, y + .5, 3038, y + .5, '#303030', '6 5'); });
months.forEach(function (x) { g += dash(x + .5, 132, x + .5, 1281, '#282828', '6 5'); });
g += dash(5, 132.5, 3038, 132.5, '#777', '4 3');
g += '<rect x="2120.500" y="660.500" width="600" height="42" fill="#0a3553" stroke="#0a8ef0" stroke-width="1.500"/>';
candles.forEach(function (c) {
  var x = Math.round(c[0]), top = Math.round(c[2]), bot = Math.round(c[3]);
  g += '<rect x="' + x + '" y="' + Math.round(c[4]) + '" width="1" height="' + Math.max(1, Math.round(c[5] - c[4])) + '" fill="#6e6e6e"/>';
  if (c[1] === 'N') {
    g += '<rect x="' + (x - 3) + '" y="' + top + '" width="7" height="2" fill="#808080"/>';
  } else {
    g += '<rect x="' + (x - 2.5) + '" y="' + (top + .5) + '" width="6" height="' + Math.max(2, bot - top) + '" fill="' + (c[1] === 'G' ? '#00ff00' : '#ff0000') + '" stroke="#808080"/>';
  }
});
g += poly(upper, '#0a8ef0') + poly(lowerA, '#0a8ef0') + poly(lowerB, '#0a8ef0') + poly(lowerC, '#0a8ef0');
g += poly(maRed, '#ff0000') + poly(maOrange, '#ff6a00');
g += '<line x1="2468" y1="566" x2="2743" y2="567" stroke="#1a5a8a" stroke-width="2"/>';
g += dash(2024, 496, 2800, 496, '#00e000', '20 9', 2) + dash(1963, 535, 2736, 535, '#00f000', '20 9', 2);
g += dash(1989, 622, 2709, 623, '#f00000', '20 6', 2) + dash(2016, 655, 2735, 657, '#f00000', '20 6', 2) + dash(1935, 691, 2779, 698, '#f00000', '20 6', 2);
g += '</g>';
g += '<line x1="2487" y1="622" x2="2668" y2="446" stroke="#0000ff" stroke-width="3"/><path d="M2673 440l-8 22-14-14z" fill="#0000ff"/>';
document.getElementById('priceChart').innerHTML = g;

var s = '<g shape-rendering="crispEdges">';
[1364, 1433, 1503, 1572, 1642].forEach(function (y) { s += dash(5, y + .5, 3038, y + .5, '#3a3a3a', '6 4'); });
[1419, 1586].forEach(function (y) { s += dash(5, y + .5, 3038, y + .5, '#6a6a6a', '5 3'); });
months.forEach(function (x) { s += dash(x + .5, 1332, x + .5, 1659, '#282828', '6 5'); });
s += poly(kLine, '#0a8ef0') + poly(dLine, '#ff6a00') + '</g>';
document.getElementById('stochChart').innerHTML = s;
</script>
</body>
</html>
